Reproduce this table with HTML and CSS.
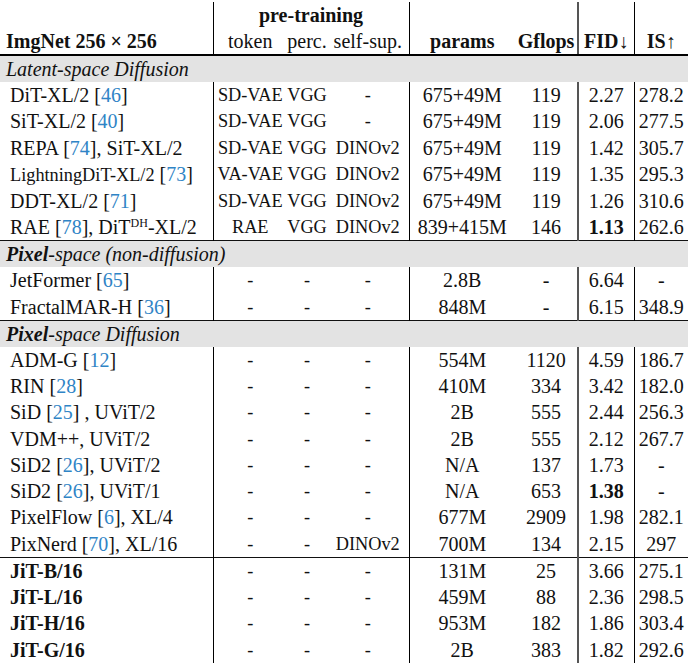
FILE: index.html
```html
<!DOCTYPE html>
<html>
<head>
<meta charset="utf-8">
<link rel="stylesheet" href="styles.css">
</head>
<body>
<table class="tbl">
  <colgroup>
    <col class="w-name"><col class="w-tok"><col class="w-perc"><col class="w-ss"><col class="w-par"><col class="w-gf"><col class="w-fid"><col class="w-is">
  </colgroup>
  <thead>
    <tr class="hrow">
      <th class="hname vr" rowspan="2">ImgNet 256&#8197;×&#8197;256</th>
      <th class="hpre vr" colspan="3">pre-training</th>
      <th class="hb" rowspan="2">params</th>
      <th class="hb vr-gray" rowspan="2">Gflops</th>
      <th class="hb vr" rowspan="2">FID↓</th>
      <th class="hb" rowspan="2">IS↑</th>
    </tr>
    <tr class="hrow">
      <th class="hsub">token</th>
      <th class="hsub">perc.</th>
      <th class="hsub vr">self-sup.</th>
    </tr>
  </thead>
  <tbody>
    <tr class="band"><td colspan="8"><i>Latent-space Diffusion</i></td></tr>
    <tr class="row"><td>DiT-XL/2 <span class="ref">[<a>46</a>]</span></td><td>SD-VAE</td><td>VGG</td><td>-</td><td>675+49M</td><td>119</td><td>2.27</td><td>278.2</td></tr>
    <tr class="row"><td>SiT-XL/2 <span class="ref">[<a>40</a>]</span></td><td>SD-VAE</td><td>VGG</td><td>-</td><td>675+49M</td><td>119</td><td>2.06</td><td>277.5</td></tr>
    <tr class="row"><td>REPA <span class="ref">[<a>74</a>]</span>, SiT-XL/2</td><td>SD-VAE</td><td>VGG</td><td>DINOv2</td><td>675+49M</td><td>119</td><td>1.42</td><td>305.7</td></tr>
    <tr class="row"><td><span class="sm">LightningDiT-XL/2</span> <span class="ref">[<a>73</a>]</span></td><td>VA-VAE</td><td>VGG</td><td>DINOv2</td><td>675+49M</td><td>119</td><td>1.35</td><td>295.3</td></tr>
    <tr class="row"><td>DDT-XL/2 <span class="ref">[<a>71</a>]</span></td><td>SD-VAE</td><td>VGG</td><td>DINOv2</td><td>675+49M</td><td>119</td><td>1.26</td><td>310.6</td></tr>
    <tr class="row"><td>RAE <span class="ref">[<a>78</a>]</span>, DiT<sup class="sup">DH</sup>-XL/2</td><td>RAE</td><td>VGG</td><td>DINOv2</td><td>839+415M</td><td>146</td><td><b>1.13</b></td><td>262.6</td></tr>
    <tr class="band"><td colspan="8"><b><i>Pixel</i></b><i>-space (non-diffusion)</i></td></tr>
    <tr class="row"><td>JetFormer <span class="ref">[<a>65</a>]</span></td><td>-</td><td>-</td><td>-</td><td>2.8B</td><td>-</td><td>6.64</td><td>-</td></tr>
    <tr class="row"><td>FractalMAR-H <span class="ref">[<a>36</a>]</span></td><td>-</td><td>-</td><td>-</td><td>848M</td><td>-</td><td>6.15</td><td>348.9</td></tr>
    <tr class="band"><td colspan="8"><b><i>Pixel</i></b><i>-space Diffusion</i></td></tr>
    <tr class="row"><td>ADM-G <span class="ref">[<a>12</a>]</span></td><td>-</td><td>-</td><td>-</td><td>554M</td><td>1120</td><td>4.59</td><td>186.7</td></tr>
    <tr class="row"><td>RIN <span class="ref">[<a>28</a>]</span></td><td>-</td><td>-</td><td>-</td><td>410M</td><td>334</td><td>3.42</td><td>182.0</td></tr>
    <tr class="row"><td>SiD <span class="ref">[<a>25</a>]</span> , UViT/2</td><td>-</td><td>-</td><td>-</td><td>2B</td><td>555</td><td>2.44</td><td>256.3</td></tr>
    <tr class="row"><td>VDM++, UViT/2</td><td>-</td><td>-</td><td>-</td><td>2B</td><td>555</td><td>2.12</td><td>267.7</td></tr>
    <tr class="row"><td>SiD2 <span class="ref">[<a>26</a>]</span>, UViT/2</td><td>-</td><td>-</td><td>-</td><td>N/A</td><td>137</td><td>1.73</td><td>-</td></tr>
    <tr class="row"><td>SiD2 <span class="ref">[<a>26</a>]</span>, UViT/1</td><td>-</td><td>-</td><td>-</td><td>N/A</td><td>653</td><td><b>1.38</b></td><td>-</td></tr>
    <tr class="row"><td>PixelFlow <span class="ref">[<a>6</a>]</span>, XL/4</td><td>-</td><td>-</td><td>-</td><td>677M</td><td>2909</td><td>1.98</td><td>282.1</td></tr>
    <tr class="row"><td>PixNerd <span class="ref">[<a>70</a>]</span>, XL/16</td><td>-</td><td>-</td><td>DINOv2</td><td>700M</td><td>134</td><td>2.15</td><td>297</td></tr>
    <tr class="row ours first"><td>JiT-B/16</td><td>-</td><td>-</td><td>-</td><td>131M</td><td>25</td><td>3.66</td><td>275.1</td></tr>
    <tr class="row ours"><td>JiT-L/16</td><td>-</td><td>-</td><td>-</td><td>459M</td><td>88</td><td>2.36</td><td>298.5</td></tr>
    <tr class="row ours"><td>JiT-H/16</td><td>-</td><td>-</td><td>-</td><td>953M</td><td>182</td><td>1.86</td><td>303.4</td></tr>
    <tr class="row ours"><td>JiT-G/16</td><td>-</td><td>-</td><td>-</td><td>2B</td><td>383</td><td>1.82</td><td>292.6</td></tr>
  </tbody>
</table>
</body>
</html>
```

FILE: styles.css
```css
html, body {
  margin: 0;
  padding: 0;
  background: #fff;
}
body {
  font-family: "Liberation Serif", "Times New Roman", serif;
  font-size: 20px;
  color: #111;
}
.tbl {
  border-collapse: collapse;
  table-layout: fixed;
  width: 688px;
  margin-top: 2px;
}
.w-name { width: 213px; }
.w-tok { width: 74px; }
.w-perc { width: 40px; }
.w-ss { width: 82px; }
.w-par { width: 106px; }
.w-gf { width: 63px; }
.w-fid { width: 56px; }
.w-is { width: 54px; }

.tbl th, .tbl td {
  padding: 0;
  white-space: nowrap;
  overflow: visible;
}
.hrow th {
  height: 26px;
  line-height: 26px;
  font-weight: bold;
  text-align: center;
  vertical-align: bottom;
}
.hrow:last-child th {
  border-bottom: 2px solid #000;
}
.hname {
  text-align: left !important;
  padding-left: 6px !important;
  border-bottom: 2px solid #000;
}
.hb { border-bottom: 2px solid #000; }
.hpre { vertical-align: middle !important; }
.hsub {
  font-weight: normal !important;
}
.vr { border-right: 1px solid #000; }
.vr-gray { border-right: 2px solid #555; }

.band td {
  height: 26px;
  line-height: 26px;
  background: #e3e3e3;
  padding-left: 6px;
  border-top: 1px solid #111;
}
.tbl thead + tbody .band:first-child td { border-top: none; }

.row td {
  height: 26.25px;
  line-height: 26px;
  text-align: center;
  vertical-align: middle;
}
.row td:nth-child(1) {
  text-align: left;
  padding-left: 10px;
  border-right: 1px solid #000;
}
.row td:nth-child(2),
.row td:nth-child(3),
.row td:nth-child(4) {
  font-size: 18.3px;
}
.row td:nth-child(4) { border-right: 1px solid #000; }
.row td:nth-child(6) { border-right: 2px solid #555; }
.row td:nth-child(7) { border-right: 1px solid #000; }

.ours td:nth-child(1) { font-weight: bold; }
.first td { border-top: 1px solid #111; }

.ref a { color: #2f84c6; }
.sm { font-size: 18.3px; }
.sup {
  font-size: 12px;
  line-height: 0;
  vertical-align: 7px;
}
```
